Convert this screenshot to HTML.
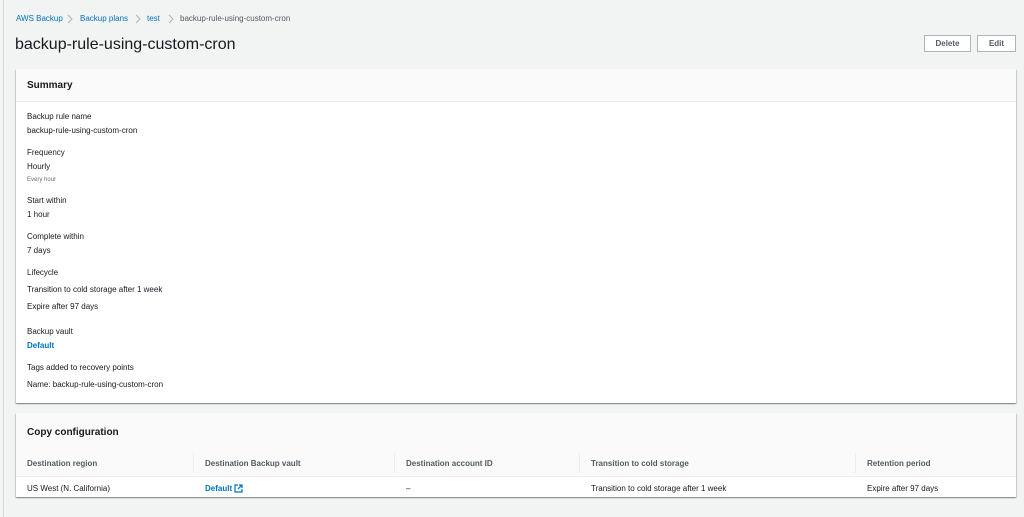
<!DOCTYPE html>
<html><head><meta charset="utf-8"><style>
*{margin:0;padding:0;box-sizing:border-box}
body{width:1024px;height:517px;background:#f2f3f3;font-family:"Liberation Sans",sans-serif;color:#16191f;position:relative;overflow:hidden;font-size:8px}
.a{position:absolute;white-space:nowrap;line-height:10px}
.l{color:#0073bb}
.card{position:absolute;left:16px;width:1000px;background:#fff;box-shadow:0 1px 1px rgba(0,28,36,.3),1px 1px 1px rgba(0,28,36,.15),-1px 1px 1px rgba(0,28,36,.15)}
.hd{position:absolute;left:0;top:0;width:100%;background:#fafafa;border-bottom:1px solid #eaeded}
.btn{position:absolute;top:35px;height:17px;border:1px solid #aab7b8;background:#fff;font-weight:bold;color:#545b64;font-size:8px;text-align:center;line-height:15px}
.th{font-weight:bold;color:#545b64}
.sep{position:absolute;top:453px;width:1px;height:20px;background:#eaeded}
.chev{position:absolute;top:14px}
</style></head><body>
<div style="position:absolute;left:3px;top:0;width:1px;height:517px;background:#d5dbdb"></div>
<div class="a l" style="left:16px;top:14px">AWS Backup</div>
<svg class="chev" style="left:67px" width="6" height="10"><path d="M1 1l4 4-4 4" fill="none" stroke="#aab7b8" stroke-width="1"/></svg>
<div class="a l" style="left:80px;top:14px">Backup plans</div>
<svg class="chev" style="left:135px" width="6" height="10"><path d="M1 1l4 4-4 4" fill="none" stroke="#aab7b8" stroke-width="1"/></svg>
<div class="a l" style="left:147px;top:14px">test</div>
<svg class="chev" style="left:168px" width="6" height="10"><path d="M1 1l4 4-4 4" fill="none" stroke="#aab7b8" stroke-width="1"/></svg>
<div class="a" style="left:180px;top:14px;color:#545b64">backup-rule-using-custom-cron</div>
<div class="a" style="left:15px;top:35px;font-size:16px;line-height:20px">backup-rule-using-custom-cron</div>
<div class="btn" style="left:924px;width:47px">Delete</div>
<div class="btn" style="left:977px;width:39px">Edit</div>

<div class="card" style="top:69px;height:334px">
<div class="hd" style="height:33px"></div>
<div class="a" style="left:11px;top:11px;font-size:10px;font-weight:bold;line-height:12px">Summary</div>
</div>
<div class="a" style="left:27px;top:112px">Backup rule name</div>
<div class="a" style="left:27px;top:126px">backup-rule-using-custom-cron</div>
<div class="a" style="left:27px;top:148px">Frequency</div>
<div class="a" style="left:27px;top:162px">Hourly</div>
<div class="a" style="left:27px;top:175px;font-size:6px;color:#687078">Every hour</div>
<div class="a" style="left:27px;top:196px">Start within</div>
<div class="a" style="left:27px;top:210px">1 hour</div>
<div class="a" style="left:27px;top:232px">Complete within</div>
<div class="a" style="left:27px;top:246px">7 days</div>
<div class="a" style="left:27px;top:268px">Lifecycle</div>
<div class="a" style="left:27px;top:285px">Transition to cold storage after 1 week</div>
<div class="a" style="left:27px;top:302px">Expire after 97 days</div>
<div class="a" style="left:27px;top:327px">Backup vault</div>
<div class="a l" style="left:27px;top:341px;font-weight:bold">Default</div>
<div class="a" style="left:27px;top:363px">Tags added to recovery points</div>
<div class="a" style="left:27px;top:380px">Name: backup-rule-using-custom-cron</div>

<div class="card" style="top:413px;height:84px">
<div class="hd" style="height:64px"></div>
<div class="a" style="left:11px;top:14px;font-size:10px;font-weight:bold;line-height:12px">Copy configuration</div>
</div>
<div class="sep" style="left:193px"></div><div class="sep" style="left:394px"></div><div class="sep" style="left:579px"></div><div class="sep" style="left:855px"></div>
<div class="a th" style="left:27px;top:459px">Destination region</div>
<div class="a th" style="left:205px;top:459px">Destination Backup vault</div>
<div class="a th" style="left:406px;top:459px">Destination account ID</div>
<div class="a th" style="left:591px;top:459px">Transition to cold storage</div>
<div class="a th" style="left:867px;top:459px">Retention period</div>
<div class="a" style="left:27px;top:484px">US West (N. California)</div>
<div class="a l" style="left:205px;top:484px;font-weight:bold">Default</div>
<svg class="a" style="left:234px;top:484px" width="9" height="9" viewBox="0 0 9 9"><path d="M4 1H1v7h7V5M5 1h3v3M8 1L4 5" fill="none" stroke="#0073bb" stroke-width="1.2"/></svg>
<div class="a" style="left:406px;top:484px">–</div>
<div class="a" style="left:591px;top:484px">Transition to cold storage after 1 week</div>
<div class="a" style="left:867px;top:484px">Expire after 97 days</div>
</body></html>
